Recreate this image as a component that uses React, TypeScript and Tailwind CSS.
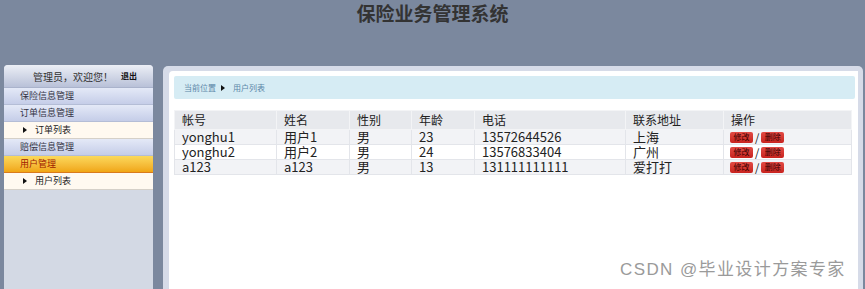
const menu = [
  { label: "保险信息管理", kind: "group" },
  { label: "订单信息管理", kind: "group" },
  { label: "订单列表", kind: "item" },
  { label: "赔偿信息管理", kind: "group" },
  { label: "用户管理", kind: "active" },
  { label: "用户列表", kind: "item" },
];

const users = [
  { account: "yonghu1", name: "用户1", sex: "男", age: 23, phone: "13572644526", addr: "上海" },
  { account: "yonghu2", name: "用户2", sex: "男", age: 24, phone: "13576833404", addr: "广州" },
  { account: "a123", name: "a123", sex: "男", age: 13, phone: "131111111111", addr: "爱打打" },
];

const cols = [
  { title: "帐号", w: "w-[102px]" },
  { title: "姓名", w: "w-[73px]" },
  { title: "性别", w: "w-[62px]" },
  { title: "年龄", w: "w-[63px]" },
  { title: "电话", w: "w-[151px]" },
  { title: "联系地址", w: "w-[98px]" },
  { title: "操作", w: "" },
];

const Arrow = () => (
  <span className="inline-block w-0 h-0 border-y-[3px] border-y-transparent border-l-[4px] border-l-[#111]" />
);

function Sidebar() {
  return (
    <div className="w-[149px] flex flex-col bg-[#d3d9e4] rounded-t-[4px] overflow-hidden">
      <div className="h-[23px] flex items-center bg-gradient-to-b from-[#eceff6] to-[#b9c1d8] border-b border-[#aab3cc]">
        <span className="ml-[29px] text-[10px] text-[#333]">管理员，欢迎您！</span>
        <span className="ml-[8px] text-[8px] font-bold text-[#111]">退出</span>
      </div>
      {menu.map((m) => {
        if (m.kind === "group")
          return (
            <div key={m.label} className="h-[17px] flex items-center pl-[16px] text-[9px] text-[#334] bg-gradient-to-b from-[#e4e9f7] to-[#c5cde8] border-b border-[#b4bdd6]">
              {m.label}
            </div>
          );
        if (m.kind === "active")
          return (
            <div key={m.label} className="h-[17px] flex items-center pl-[16px] text-[9px] text-[#a02000] bg-gradient-to-b from-[#fbd95a] to-[#f0a611] border-b border-[#d97a1c]">
              {m.label}
            </div>
          );
        return (
          <div key={m.label} className="h-[17px] flex items-center gap-[8px] pl-[19px] text-[9px] text-[#222] bg-[#fff9f0] border-b border-[#d5d0c8]">
            <Arrow />
            {m.label}
          </div>
        );
      })}
      <div className="flex-1" />
    </div>
  );
}

function Btn({ text }: { text: string }) {
  return (
    <span className="inline-flex items-center justify-center w-[23px] h-[11px] rounded-[2px] bg-gradient-to-b from-[#e24a44] to-[#c8221e] text-[8px] text-[#3a0000] leading-none">
      {text}
    </span>
  );
}

export default function App() {
  return (
    <div
      className="relative w-[865px] h-[289px] overflow-hidden bg-[#7b889e]"
      style={{ fontFamily: '"Noto Sans CJK SC", "Noto Sans", sans-serif' }}
    >
      <div className="h-[65px] flex justify-center">
        <h1 className="pt-[1px] text-[19px] font-bold text-[#333] leading-[24px]">保险业务管理系统</h1>
      </div>
      <div className="flex h-[224px] pl-[4px] gap-[10px]">
        <Sidebar />
        <div className="mt-[1px] w-[700px] bg-[#d6dbe8] rounded-t-[5px] pt-[5px] pl-[6px] pr-[5px]">
          <div className="h-full bg-white rounded-tl-[4px] p-[5px] pr-[3px]">
            <div className="h-[23px] flex items-center gap-[5px] pl-[10px] bg-[#d6ecf4] rounded-[2px] text-[8px] text-[#5b86a8]">
              <span>当前位置</span>
              <Arrow />
              <span className="ml-[3px]">用户列表</span>
            </div>
            <table className="mt-[11px] w-[678px] border-collapse text-[13px] text-[#222]">
              <thead>
                <tr className="h-[19px] bg-[#e7e9ed]">
                  {cols.map((c) => (
                    <th key={c.title} className={`${c.w} pl-[7px] text-left font-normal border border-[#f3f4f6] leading-[16px] text-[12px]`}>
                      {c.title}
                    </th>
                  ))}
                </tr>
              </thead>
              <tbody>
                {users.map((u, i) => (
                  <tr key={u.account} className={i % 2 === 0 ? "h-[15px] bg-[#f2f3f6]" : "h-[14px] bg-white"}>
                    {[u.account, u.name, u.sex, u.age, u.phone, u.addr].map((v, j) => (
                      <td key={j} className="pl-[7px] border border-[#e3e5ea] leading-[14px] py-0">{v}</td>
                    ))}
                    <td className="pl-[6px] border border-[#e3e5ea] leading-[14px] py-0">
                      <div className="flex items-center gap-[2px]">
                        <Btn text="修改" />
                        <span className="text-[11px] leading-[12px] text-[#111]">/</span>
                        <Btn text="删除" />
                      </div>
                    </td>
                  </tr>
                ))}
              </tbody>
            </table>
          </div>
        </div>
      </div>
      <div
        className="absolute left-[620px] top-[257px] text-[17px] tracking-[1.4px] text-[#9a9a9a] [text-shadow:0_1px_0_#fff]"
        style={{ fontFamily: '"Liberation Sans", "Noto Sans CJK SC", sans-serif' }}
      >
        CSDN @毕业设计方案专家
      </div>
    </div>
  );
}
